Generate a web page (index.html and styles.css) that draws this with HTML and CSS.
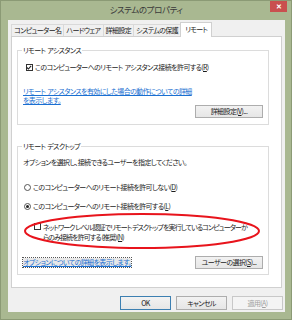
FILE: index.html
```html
<!DOCTYPE html>
<html lang="ja">
<head>
<meta charset="utf-8">
<link rel="stylesheet" href="styles.css">
</head>
<body>
<div class="window">
  <div class="titlebar">
    <span></span>
    <span class="title">システムのプロパティ</span>
    <span class="close">✕</span>
  </div>
  <div class="client">
    <div class="tabs">
      <span class="tab">コンピューター名</span>
      <span class="tab">ハードウェア</span>
      <span class="tab">詳細設定</span>
      <span class="tab">システムの保護</span>
      <span class="tab active">リモート</span>
    </div>
    <div class="panel">
      <fieldset class="group g1">
        <legend>リモート&nbsp; アシスタンス</legend>
        <label class="row check-row">
          <span class="cb checked"><svg viewBox="0 0 7 7" width="7" height="7"><path d="M1 3.5 L2.8 5.3 L6 1.5" fill="none" stroke="#222" stroke-width="1.3"/></svg></span>
          <span>このコンピューターへのリモート&nbsp; アシスタンス接続を許可する(<u>R</u>)</span>
        </label>
        <a class="link l1">リモート&nbsp; アシスタンスを有効にした場合の動作についての詳細<br>を表示します。</a>
        <div class="btn-row"><span class="btn">詳細設定(<u>V</u>)...</span></div>
      </fieldset>
      <fieldset class="group g2">
        <legend>リモート&nbsp; デスクトップ</legend>
        <p class="intro">オプションを選択し、接続できるユーザーを指定してください。</p>
        <label class="row radio-row r1">
          <span class="rb"></span>
          <span>このコンピューターへのリモート接続を許可しない(<u>D</u>)</span>
        </label>
        <label class="row radio-row r2">
          <span class="rb on"></span>
          <span>このコンピューターへのリモート接続を許可する(<u>L</u>)</span>
        </label>
        <label class="row nla">
          <span class="cb"></span>
          <span class="nla-text">ネットワーク レベル認証でリモート デスクトップを実行しているコンピューターか<br>らのみ接続を許可する (推奨)(<u>N</u>)</span>
        </label>
        <div class="bottom-row">
          <a class="link focus">オプションについての詳細を表示します。</a>
          <span class="btn">ユーザーの選択(<u>S</u>)...</span>
        </div>
        <svg class="ellipse" width="242" height="40" viewBox="0 0 242 40"><ellipse cx="121" cy="19" rx="117" ry="17" fill="none" stroke="#e8141c" stroke-width="2"/></svg>
      </fieldset>
    </div>
    <div class="actions">
      <span class="btn big default">OK</span>
      <span class="btn big">キャンセル</span>
      <span class="btn big disabled">適用(<u>A</u>)</span>
    </div>
  </div>
</div>
</body>
</html>
```
FILE: styles.css
```css
* { box-sizing: border-box; }
html, body { margin: 0; padding: 0; }
body {
  width: 292px;
  height: 320px;
  background: #a9b891;
  font-family: "Noto Sans CJK JP", "Noto Sans", sans-serif;
  font-feature-settings: "palt";
  font-size: 7px;
  letter-spacing: -0.6px;
  color: #1c1c1c;
  overflow: hidden;
}
.window {
  width: 292px;
  height: 320px;
  border: 1px solid #8b9a75;
  display: flex;
  flex-direction: column;
}
.titlebar {
  height: 19px;
  display: grid;
  grid-template-columns: 1fr auto 1fr;
  align-items: start;
}
.title {
  font-size: 8.5px;
  letter-spacing: -0.4px;
  line-height: 17px;
  color: #3a3a3a;
}
.close {
  justify-self: end;
  margin-right: 4px;
  width: 17px;
  height: 11px;
  background: #c9504f;
  color: #fff;
  font-size: 7px;
  letter-spacing: 0;
  line-height: 11px;
  text-align: center;
  font-weight: bold;
}
.client {
  margin: 0 6px 7px 7px;
  height: 292px;
  background: #f0f0f0;
  padding: 4px 2px 0 3px;
  display: flex;
  flex-direction: column;
}
.tabs {
  display: flex;
  height: 12px;
  align-items: flex-end;
  position: relative;
  z-index: 1;
}
.tab {
  height: 12px;
  border: 1px solid #d9d9d9;
  border-bottom: none;
  margin-right: -1px;
  background: #f0f0f0;
  padding: 0 2px;
  line-height: 11px;
  color: #222;
}
.active {
  height: 15px;
  margin-top: -2px;
  margin-bottom: -1px;
  background: #fff;
  padding: 0 4px;
  line-height: 13px;
  border-color: #d0d0d0;
}
.panel {
  width: 271px;
  height: 252px;
  background: #fff;
  border: 1px solid #d0d0d0;
  padding: 8px 12px 0 5px;
  display: flex;
  flex-direction: column;
  gap: 16px;
}
.group {
  margin: 0;
  border: 1px solid #dcdcdc;
  padding: 0 5px 0 5px;
  position: relative;
}
legend {
  padding: 0 1px;
  margin-left: -1px;
  line-height: 10px;
  color: #222;
}
.g1 { height: 80px; }
.g2 { height: 134px; }
.row {
  display: flex;
  align-items: center;
  gap: 2px;
  line-height: 10px;
}
.check-row { margin: 7px 0 0 3px; }
.cb {
  width: 7px;
  height: 7px;
  border: 1px solid #333;
  background: #fff;
  flex: none;
  display: flex;
}
.cb svg { margin: -1px 0 0 -1px; }
.link {
  color: #1a6fd1;
  text-decoration: underline;
  line-height: 9px;
  display: block;
}
.l1 { margin-top: 15px; }
.btn-row {
  display: flex;
  justify-content: flex-end;
  margin-top: 0;
}
.btn {
  width: 68px;
  height: 13px;
  border: 1px solid #adadad;
  background: linear-gradient(#f2f2f2, #e6e6e6);
  text-align: center;
  line-height: 11px;
  color: #222;
}
.intro { margin: 6px 0 0 0; line-height: 10px; }
.radio-row { margin-left: 1px; }
.r1 { margin-top: 15px; }
.r2 { margin-top: 9px; }
.rb {
  width: 7px;
  height: 7px;
  border: 1px solid #555;
  border-radius: 50%;
  background: #fff;
  flex: none;
  display: flex;
  align-items: center;
  justify-content: center;
}
.rb.on::after {
  content: "";
  width: 3px;
  height: 3px;
  border-radius: 50%;
  background: #222;
}
.nla {
  margin: 11px 0 0 11px;
  align-items: flex-start;
}
.nla .cb { margin-top: 1px; }
.nla-text { letter-spacing: -0.9px; }
.bottom-row {
  display: flex;
  justify-content: space-between;
  align-items: center;
  margin-top: 14px;
}
.focus {
  outline: 1px dotted #555;
  background: #e8e8e8;
  line-height: 9px;
}
.ellipse {
  position: absolute;
  left: 3px;
  top: 61px;
}
.actions {
  display: flex;
  justify-content: flex-end;
  gap: 5px;
  margin-top: 8px;
}
.big {
  width: 51px;
  height: 14px;
  line-height: 12px;
}
.default { border-color: #3c7fb1; }
.disabled { color: #a0a0a0; border-color: #c8c8c8; background: #f4f4f4; }
u { text-decoration: underline; }
```
